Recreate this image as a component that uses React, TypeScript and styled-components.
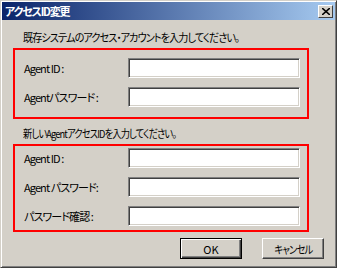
import React from 'react';
import styled, { createGlobalStyle } from 'styled-components';

const GlobalStyle = createGlobalStyle`
  html, body {
    margin: 0;
    padding: 0;
    background: #d4d0c8;
  }
  * {
    box-sizing: border-box;
  }
`;

const Window = styled.div`
  width: 337px;
  height: 268px;
  background: #d4d0c8;
  border-top: 1px solid #d4d0c8;
  border-left: 1px solid #d4d0c8;
  border-right: 1px solid #404040;
  border-bottom: 1px solid #404040;
  box-shadow: inset 1px 1px 0 #fff, inset -1px -1px 0 #808080;
  padding: 1px;
  display: flex;
  flex-direction: column;
  font-family: 'Noto Sans CJK JP', 'Liberation Sans', sans-serif;
  font-size: 11px;
  font-feature-settings: 'palt';
  color: #000;
`;

const TitleBar = styled.div`
  height: 18px;
  display: flex;
  align-items: center;
  justify-content: space-between;
  padding: 0 2px 0 3px;
  background: linear-gradient(to right, #0a246a, #a6caf0);
`;

const Title = styled.span`
  color: #fff;
  font-weight: bold;
  font-size: 11px;
  letter-spacing: -1.2px;
`;

const CloseButton = styled.div`
  width: 15px;
  height: 13px;
  background: #d4d0c8;
  border-top: 1px solid #fff;
  border-left: 1px solid #fff;
  border-right: 1px solid #404040;
  border-bottom: 1px solid #404040;
  display: flex;
  align-items: center;
  justify-content: center;
`;

const Body = styled.div`
  display: flex;
  flex-direction: column;
  padding: 9px 0 0 11px;
`;

const Instruction = styled.div`
  height: 16px;
  line-height: 16px;
  padding-left: 10px;
  margin-bottom: 3px;
  white-space: nowrap;
`;

// narrow bitmap-style UI font: squeeze the glyphs horizontally
const Squeeze = styled.span<{ $scale: number; $origin?: string }>`
  display: inline-block;
  white-space: nowrap;
  letter-spacing: -1px;
  transform: scaleX(${({ $scale }) => $scale});
  transform-origin: ${({ $origin }) => $origin || 'left'} center;
`;

const Group = styled.div<{ $top: number; $bottom: number }>`
  width: 296px;
  border: 2px solid #ff0000;
  padding: ${({ $top, $bottom }) => `${$top}px 0 ${$bottom}px 9px`};
  display: flex;
  flex-direction: column;
  gap: 9px;
  margin-bottom: 6px;
`;

const Row = styled.div`
  display: flex;
  align-items: center;
  height: 20px;
`;

const Label = styled.span`
  width: 104px;
  letter-spacing: -0.9px;
`;

const Field = styled.input`
  width: 172px;
  height: 20px;
  margin: 0;
  padding: 0 3px;
  background: #fff;
  border-top: 1px solid #808080;
  border-left: 1px solid #808080;
  border-right: 1px solid #fff;
  border-bottom: 1px solid #fff;
  box-shadow: inset 1px 1px 0 #404040, inset -1px -1px 0 #d4d0c8;
  outline: none;
  font: inherit;
`;

const Buttons = styled.div`
  display: flex;
  justify-content: flex-end;
  gap: 20px;
  padding-right: 11px;
`;

const Button = styled.div<{ $default?: boolean }>`
  width: 62px;
  height: 21px;
  display: flex;
  align-items: center;
  justify-content: center;
  background: #d4d0c8;
  border: 1px solid;
  border-color: ${({ $default }) =>
    $default ? '#000' : '#fff #404040 #404040 #fff'};
  box-shadow: ${({ $default }) =>
    $default
      ? 'inset 1px 1px 0 #fff, inset -1px -1px 0 #404040, inset -2px -2px 0 #808080'
      : 'inset -1px -1px 0 #808080'};
`;

const oldFields = ['Agent ID :', 'Agentパスワード :'];
const newFields = ['Agent ID :', 'Agent パスワード:', 'パスワード確認 :'];

export default function App() {
  return (
    <>
      <GlobalStyle />
      <Window>
        <TitleBar>
          <Title>アクセスID変更</Title>
          <CloseButton>
            <svg width="8" height="7" viewBox="0 0 8 7">
              <path d="M0 0 L8 7 M8 0 L0 7" stroke="#000" strokeWidth="1.6" />
            </svg>
          </CloseButton>
        </TitleBar>
        <Body>
          <Instruction>
            <Squeeze $scale={0.92}>既存システムのアクセス・アカウントを入力してください。</Squeeze>
          </Instruction>
          <Group $top={8} $bottom={10}>
            {oldFields.map((f) => (
              <Row key={f}>
                <Label>{f}</Label>
                <Field />
              </Row>
            ))}
          </Group>
          <Instruction>
            <Squeeze $scale={0.84}>新しいAgentアクセスIDを入力してください。</Squeeze>
          </Instruction>
          <Group $top={2} $bottom={4}>
            {newFields.map((f) => (
              <Row key={f}>
                <Label>{f}</Label>
                <Field />
              </Row>
            ))}
          </Group>
          <Buttons>
            <Button $default>OK</Button>
            <Button>
              <Squeeze $scale={0.85} $origin="center">キャンセル</Squeeze>
            </Button>
          </Buttons>
        </Body>
      </Window>
    </>
  );
}
